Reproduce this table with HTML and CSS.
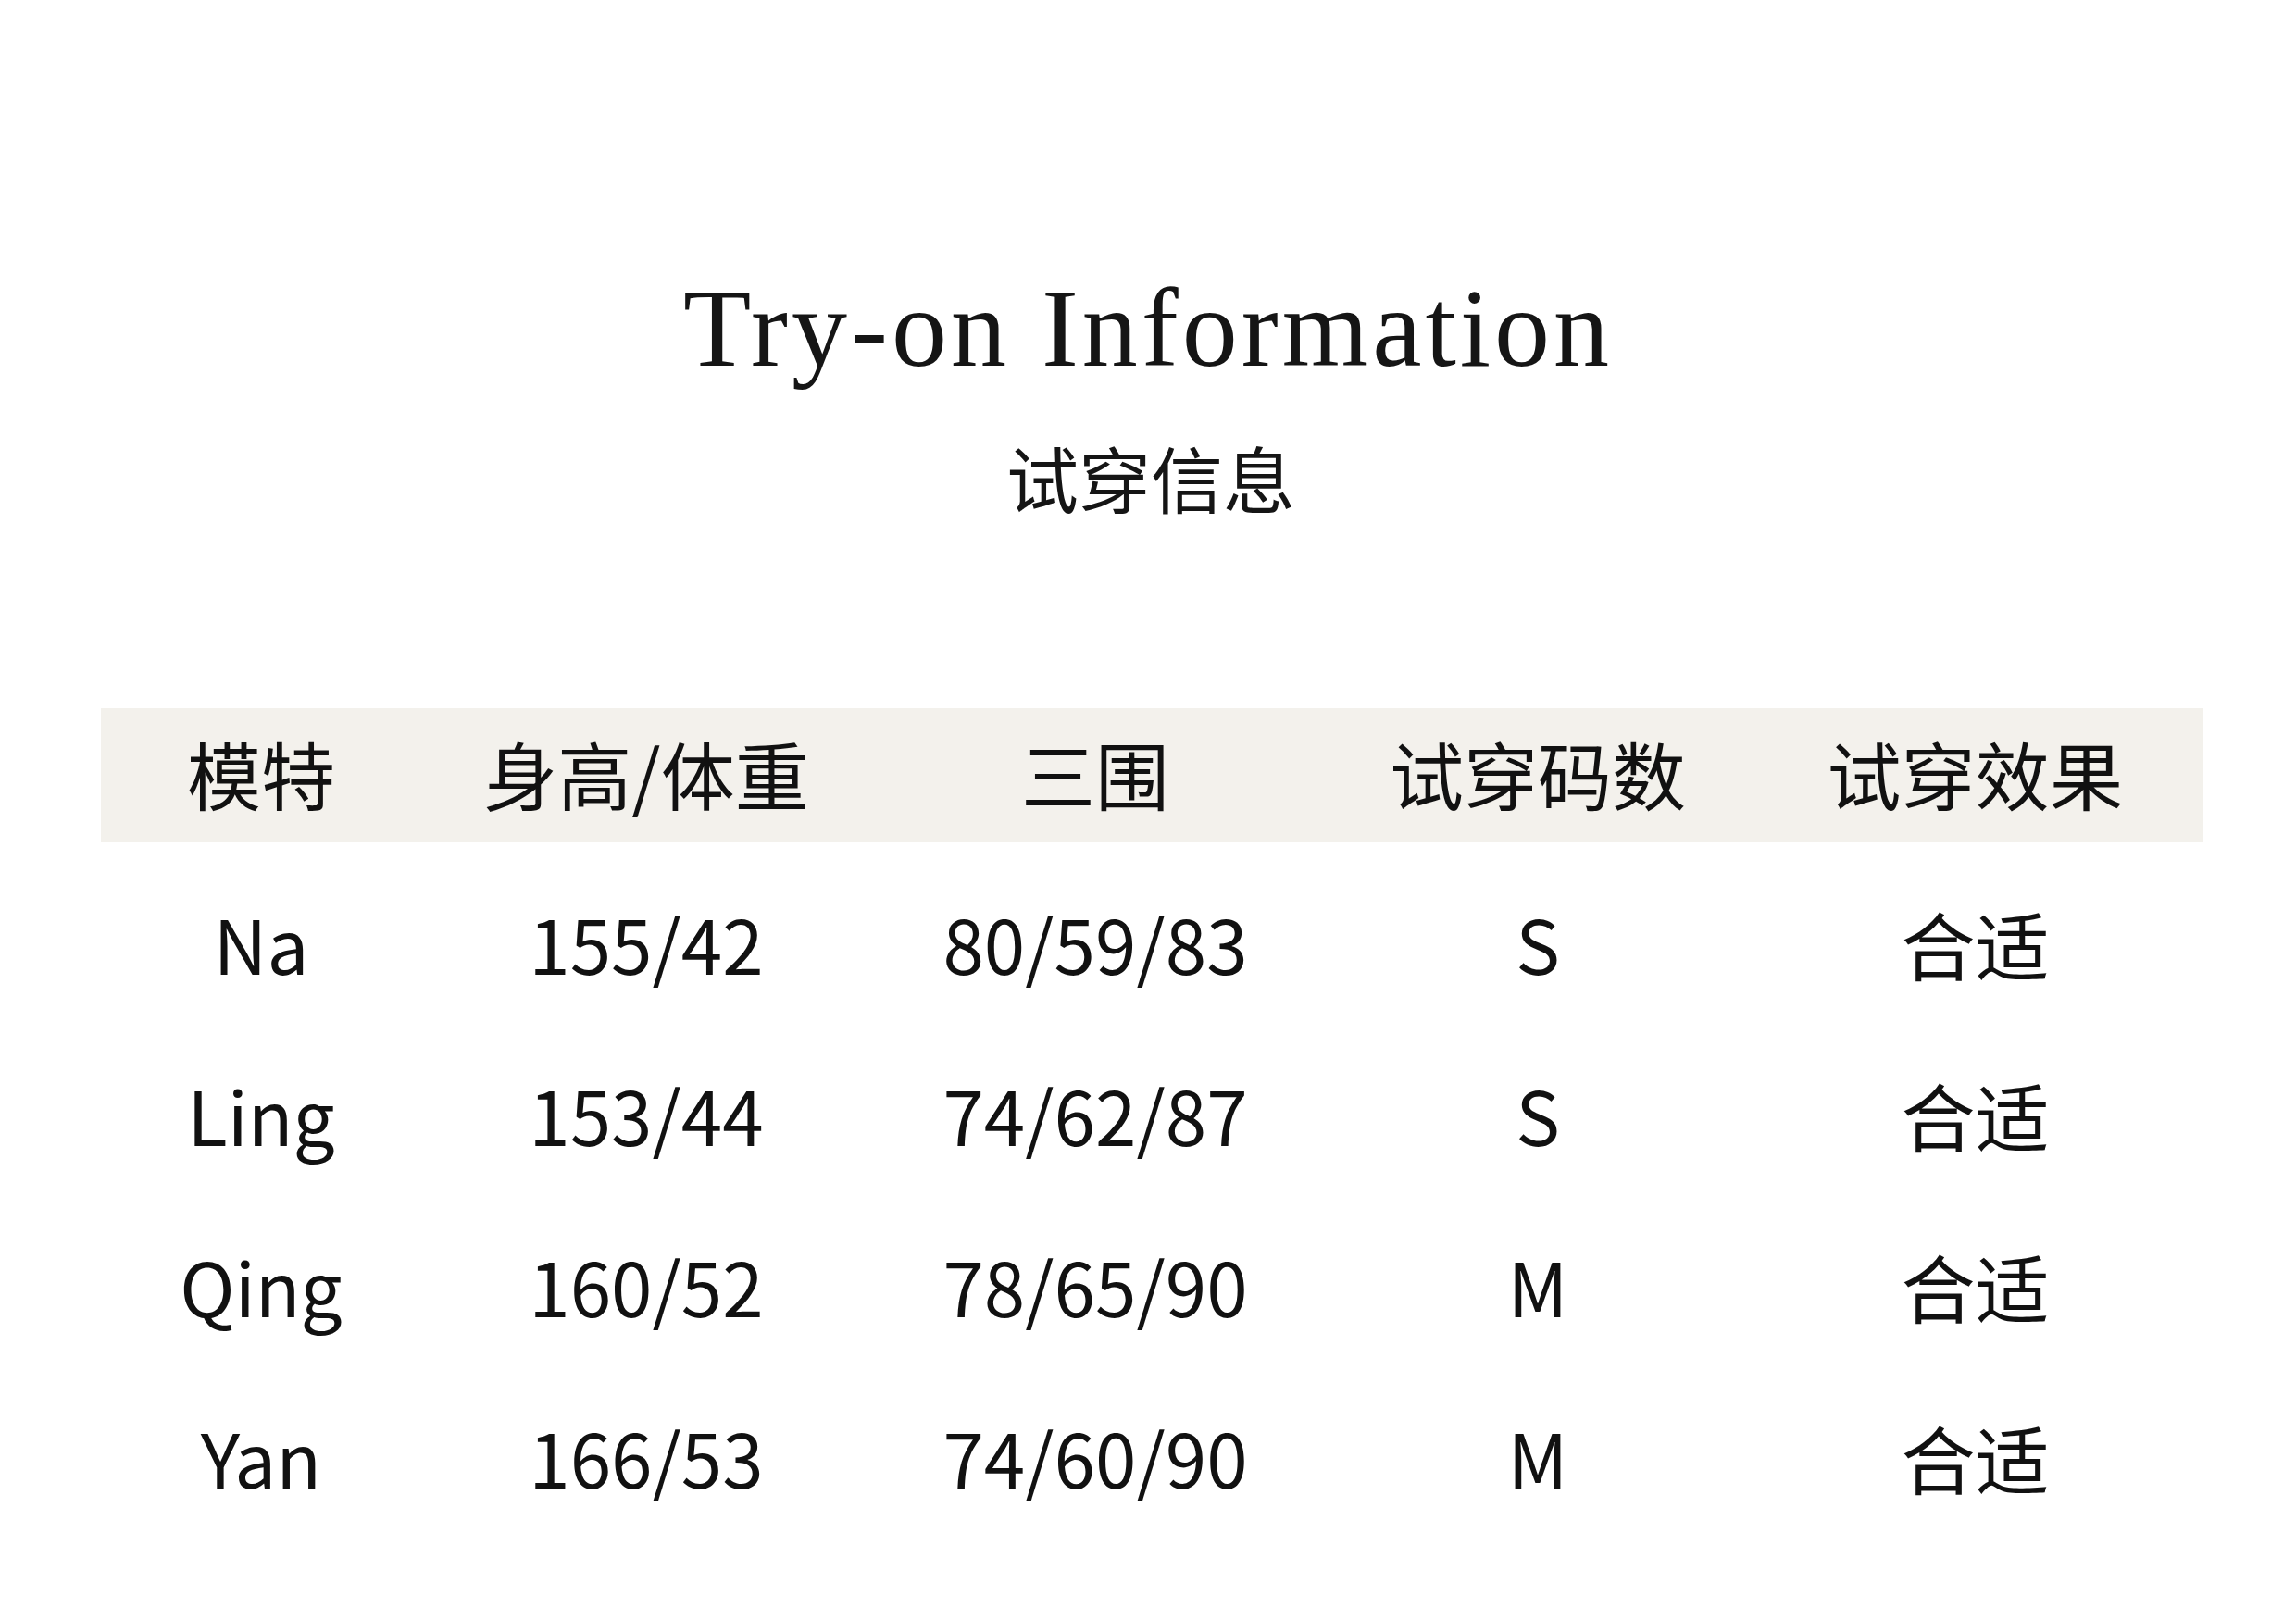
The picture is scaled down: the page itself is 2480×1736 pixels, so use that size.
FILE: index.html
```html
<!DOCTYPE html>
<html lang="zh-CN">
<head>
<meta charset="utf-8">
<title>Try-on Information</title>
<link rel="stylesheet" href="styles.css">
</head>
<body>
<main class="page">
  <h1 class="title">Try-on Information</h1>
  <h2 class="subtitle">试穿信息</h2>
  <section class="table">
    <div class="row head">
      <div class="cell">模特</div>
      <div class="cell">身高/体重</div>
      <div class="cell">三围</div>
      <div class="cell">试穿码数</div>
      <div class="cell">试穿效果</div>
    </div>
    <div class="body">
      <div class="row">
        <div class="cell">Na</div>
        <div class="cell">155/42</div>
        <div class="cell">80/59/83</div>
        <div class="cell">S</div>
        <div class="cell">合适</div>
      </div>
      <div class="row">
        <div class="cell">Ling</div>
        <div class="cell">153/44</div>
        <div class="cell">74/62/87</div>
        <div class="cell">S</div>
        <div class="cell">合适</div>
      </div>
      <div class="row">
        <div class="cell">Qing</div>
        <div class="cell">160/52</div>
        <div class="cell">78/65/90</div>
        <div class="cell">M</div>
        <div class="cell">合适</div>
      </div>
      <div class="row">
        <div class="cell">Yan</div>
        <div class="cell">166/53</div>
        <div class="cell">74/60/90</div>
        <div class="cell">M</div>
        <div class="cell">合适</div>
      </div>
    </div>
  </section>
</main>
</body>
</html>
```

FILE: styles.css
```css
html, body {
  margin: 0;
  padding: 0;
  background: #ffffff;
}

.page {
  width: 2480px;
  height: 1736px;
  overflow: hidden;
  padding-top: 283px;
  box-sizing: border-box;
  color: #111111;
  font-family: "Noto Sans CJK SC", "Noto Sans", sans-serif;
}

.title {
  margin: 0;
  text-align: center;
  font-family: "Liberation Serif", "DejaVu Serif", serif;
  font-weight: 400;
  font-size: 120px;
  letter-spacing: 4px;
  line-height: 1.2;
  color: #151515;
}

.subtitle {
  margin: 49px 0 0;
  padding-left: 6px;
  text-align: center;
  font-weight: 400;
  font-size: 78px;
  line-height: 1;
  color: #151515;
}

.table {
  margin: 211px 100px 0 109px;
  width: 2271px;
}

.row {
  display: grid;
  grid-template-columns: 346px 486px 484px 472px 473px;
  height: 185px;
  align-items: center;
  font-size: 80px;
}

.row.head {
  height: 145px;
  background: #f3f1ec;
}

.row.head .cell {
  padding-bottom: 8px;
}

.body {
  padding-top: 21px;
}

.cell {
  text-align: center;
  line-height: 1;
  white-space: nowrap;
  padding-bottom: 11px;
}
```
